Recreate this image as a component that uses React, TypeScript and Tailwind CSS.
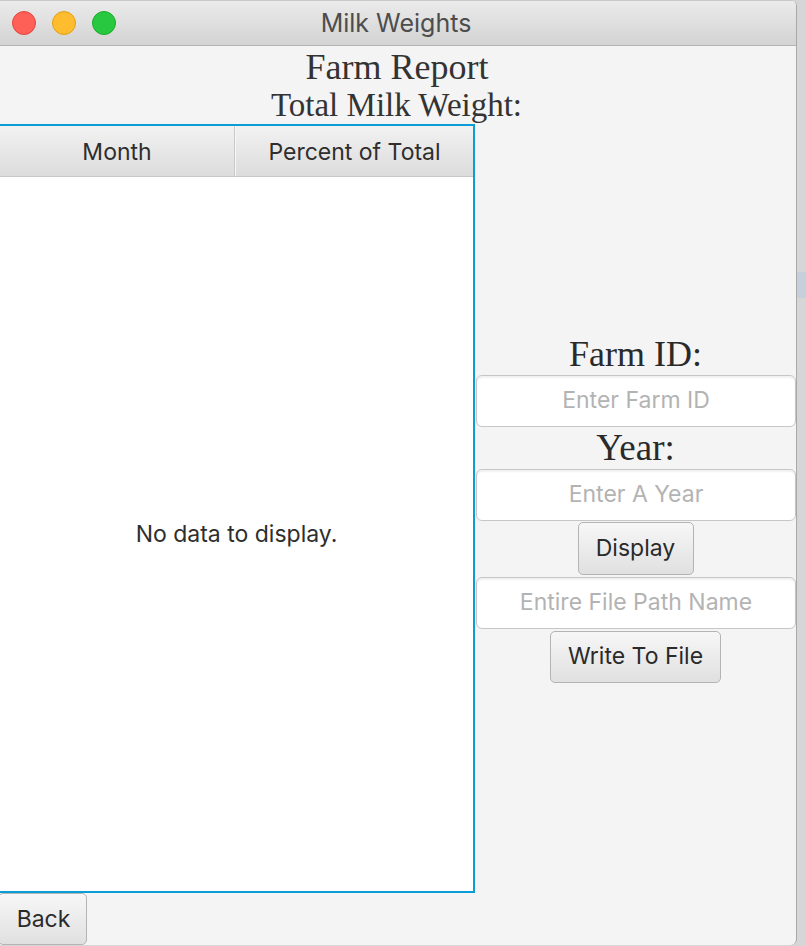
import React from "react";

const sans = { fontFamily: "Inter, 'Noto Sans', sans-serif" };
const serif = { fontFamily: "'Liberation Serif', 'Times New Roman', serif" };

function Field({ placeholder }: { placeholder: string }) {
  return (
    <div className="h-[52px] w-[320px] ml-px rounded-[6px] border-[1.5px] border-[#c6c6c6] bg-white shadow-[inset_0_2px_2px_rgba(0,0,0,0.06)] flex items-center justify-center text-[23px] text-[#b3b3b3]" style={sans}>
      {placeholder}
    </div>
  );
}

function Btn({ label, className }: { label: string; className?: string }) {
  return (
    <div
      className={"flex items-center justify-center rounded-[5px] border-[1.5px] border-[#b4b4b4] bg-gradient-to-b from-[#f7f7f7] to-[#e0e0e0] text-[23px] text-[#2a2a2a] " + (className ?? "")}
      style={sans}
    >
      {label}
    </div>
  );
}

export default function App() {
  return (
    <div className="relative w-[806px] h-[946px] bg-[#d6d6d6] overflow-hidden">
      <div className="absolute left-[797px] top-[272px] w-[9px] h-[26px] bg-[#c6d0dc]" />
      <div className="w-[797px] h-[945px] flex flex-col bg-[#f4f4f4] rounded-tr-[6px] rounded-br-[6px] border-r border-[#a9a9a9] overflow-hidden">
        {/* title bar */}
        <div className="relative h-[46px] shrink-0 bg-gradient-to-b from-[#ebebeb] to-[#d3d3d3] border-b border-[#b3b3b3] border-t border-t-[#c9c9c9] flex items-center justify-center">
          <div className="absolute left-[12px] top-[10px] flex gap-[16px]">
            <div className="w-[24px] h-[24px] rounded-full bg-[#fe5f57] border border-[#e2463f]" />
            <div className="w-[24px] h-[24px] rounded-full bg-[#febc2e] border border-[#e1a116]" />
            <div className="w-[24px] h-[24px] rounded-full bg-[#28c840] border border-[#1aab29]" />
          </div>
          <span className="text-[25px] text-[#4d4d4d] leading-none -ml-[4px]" style={sans}>Milk Weights</span>
        </div>
        {/* headings */}
        <div className="h-[78px] shrink-0 flex flex-col items-center text-[#333333]" style={serif}>
          <div className="text-[36px] leading-[40px] mt-[1px] -ml-[2px]">Farm Report</div>
          <div className="text-[33px] leading-[36px] mt-0 -ml-[3px]">Total Milk Weight:</div>
        </div>
        {/* middle */}
        <div className="flex h-[769px] shrink-0">
          <div className="w-[476px] h-full border-[2px] border-l-0 border-[#0a9dd6] bg-white flex flex-col">
            <div className="h-[51px] flex bg-gradient-to-b from-[#f2f2f2] to-[#dcdcdc] border-b border-[#c8c8c8]" style={sans}>
              <div className="w-[235px] flex items-center justify-center text-[23px] text-[#2e2e2e] border-r border-[#c9c9c9] pt-[2px]">Month</div>
              <div className="flex-1 flex items-center justify-center text-[23px] text-[#2e2e2e] border-l border-[#f6f6f6] pt-[2px]">Percent of Total</div>
            </div>
            <div className="flex-1 flex items-center justify-center text-[23px] text-[#2e2e2e]" style={sans}>
              No data to display.
            </div>
          </div>
          <div className="flex-1 flex flex-col items-center justify-center text-[#2a2a2a] pb-[2px]">
            <div className="h-[42px] text-[36px] leading-[42px]" style={serif}>Farm ID:</div>
            <Field placeholder="Enter Farm ID" />
            <div className="h-[42px] text-[37px] leading-[42px]" style={serif}>Year:</div>
            <Field placeholder="Enter A Year" />
            <Btn label="Display" className="mt-px h-[53px] w-[116px]" />
            <div className="mt-[2px]" />
            <Field placeholder="Entire File Path Name" />
            <Btn label="Write To File" className="mt-[2px] h-[52px] w-[171px]" />
          </div>
        </div>
        {/* bottom */}
        <div className="flex-1 flex items-start">
          <Btn label="Back" className="-ml-[2px] h-[52px] w-[89px] pl-[2px]" />
        </div>
      </div>
    </div>
  );
}
